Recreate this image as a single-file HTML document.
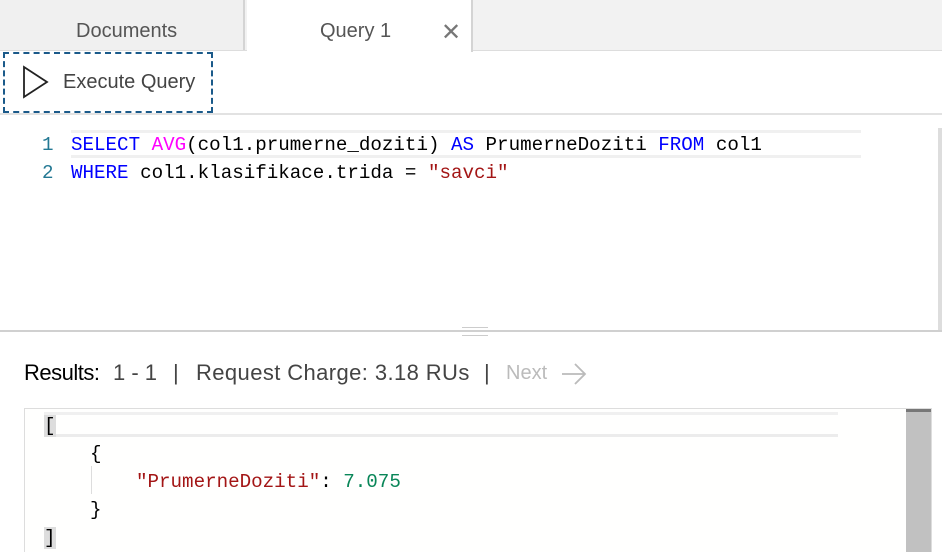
<!DOCTYPE html>
<html><head><style>
*{margin:0;padding:0;box-sizing:border-box}
body{width:942px;height:552px;overflow:hidden;background:#fff;font-family:"Liberation Sans",sans-serif;position:relative}
.a{position:absolute;white-space:pre}
.mono{font-family:"Liberation Mono",monospace;font-size:19.2px;white-space:pre}
.r{font-size:22px;color:#444;top:360px}
</style></head><body>
<div class="a" style="left:0;top:0;width:942px;height:51px;background:#f2f2f2;border-bottom:1px solid #ddd"></div>
<div class="a" style="left:0;top:0;width:245px;height:50px;background:#f0f0f0;border-right:2px solid #d4d4d4"></div>
<div class="a" style="left:76px;top:20px;font-size:20px;color:#555">Documents</div>
<div class="a" style="left:247px;top:0;width:226px;height:52px;background:#fff;border-right:2px solid #d4d4d4"></div>
<div class="a" style="left:320px;top:20px;font-size:20px;color:#555">Query 1</div>
<div class="a" style="left:441px;top:18px;font-size:24px;color:#777">✕</div>
<div class="a" style="left:3px;top:52px;width:210px;height:61px;border:2px dashed #1b5a8a"></div>
<svg class="a" style="left:22px;top:65px" width="28" height="34"><path d="M2 2 L25 17 L2 32 Z" fill="none" stroke="#222" stroke-width="1.8"/></svg>
<div class="a" style="left:63px;top:71px;font-size:20px;color:#444">Execute Query</div>
<div class="a" style="left:0;top:113px;width:942px;height:2px;background:#e2e2e2"></div>
<div class="a" style="left:71px;top:130px;width:790px;height:28px;border-top:3px solid #f0f0f0;border-bottom:3px solid #f0f0f0"></div>
<div class="a" style="left:938px;top:128px;width:4px;height:202px;background:#ddd"></div>
<div class="a mono" style="left:42px;top:134px;color:#237893">1</div>
<div class="a mono" style="left:42px;top:162px;color:#237893">2</div>
<div class="a mono" style="left:71px;top:134px;color:#000"><span style="color:#00f">SELECT</span> <span style="color:#f0f">AVG</span>(col1.prumerne_doziti) <span style="color:#00f">AS</span> PrumerneDoziti <span style="color:#00f">FROM</span> col1</div>
<div class="a mono" style="left:71px;top:162px;color:#000"><span style="color:#00f">WHERE</span> col1.klasifikace.trida = <span style="color:#a31515">"savci"</span></div>
<div class="a" style="left:0;top:330px;width:942px;height:2px;background:#d0d0d0"></div>
<div class="a" style="left:462px;top:327px;width:26px;height:1px;background:#ccc"></div>
<div class="a" style="left:462px;top:335px;width:26px;height:1px;background:#ccc"></div>
<div class="a r" style="left:24px;color:#000;letter-spacing:-0.5px">Results:</div>
<div class="a r" style="left:113px">1 - 1</div>
<div class="a r" style="left:173px">|</div>
<div class="a r" style="left:196px;letter-spacing:0.4px">Request Charge: 3.18 RUs</div>
<div class="a r" style="left:484px">|</div>
<div class="a r" style="left:506px;color:#bbb;font-size:20px;top:362px">Next</div>
<svg class="a" style="left:560px;top:362px" width="28" height="24"><path d="M2 12 H25 M15 2 L25 12 L15 22" fill="none" stroke="#bbb" stroke-width="1.8"/></svg>
<div class="a" style="left:24px;top:408px;width:908px;height:144px;border:1px solid #ddd;border-bottom:none;background:#fffffe"></div>
<div class="a" style="left:44px;top:412px;width:794px;height:25px;border-top:3px solid #f0f0f0;border-bottom:3px solid #ececec"></div>
<div class="a" style="left:906px;top:409px;width:25px;height:143px;background:#c1c1c1;border-top:3px solid #777"></div>
<div class="a" style="left:91px;top:466px;width:1px;height:28px;background:#ddd"></div>
<div class="a mono" style="left:44px;top:415px;background:#ddd">[</div>
<div class="a mono" style="left:90px;top:443px">{</div>
<div class="a mono" style="left:136px;top:471px"><span style="color:#a31515">"PrumerneDoziti"</span>: <span style="color:#098658">7.075</span></div>
<div class="a mono" style="left:90px;top:499px">}</div>
<div class="a mono" style="left:44px;top:527px;background:#ddd">]</div>
</body></html>
